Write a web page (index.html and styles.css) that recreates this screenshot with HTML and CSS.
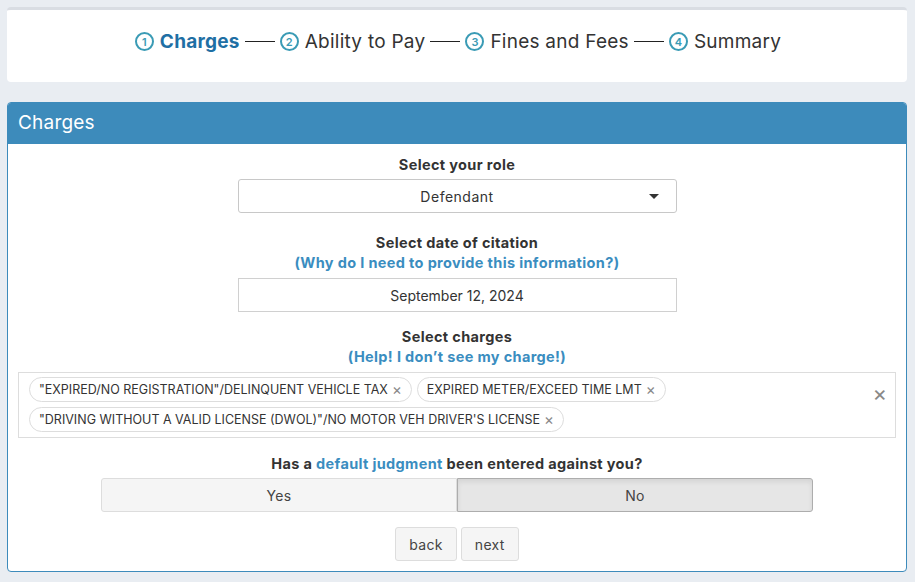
FILE: index.html
```html
<!DOCTYPE html>
<html>
<head>
<meta charset="utf-8">
<link rel="stylesheet" href="styles.css">
</head>
<body>
<div class="page">
  <div class="steps-card">
    <div class="steps">
      <span class="step active"><span class="num">1</span><span class="label">Charges</span></span>
      <span class="line"></span>
      <span class="step"><span class="num">2</span><span class="label">Ability to Pay</span></span>
      <span class="line"></span>
      <span class="step"><span class="num">3</span><span class="label">Fines and Fees</span></span>
      <span class="line"></span>
      <span class="step"><span class="num">4</span><span class="label">Summary</span></span>
    </div>
  </div>

  <div class="panel">
    <div class="panel-head">Charges</div>
    <div class="panel-body">
      <div class="field">
        <div class="label-b">Select your role</div>
        <div class="select">Defendant<span class="caret"></span></div>
      </div>
      <div class="field">
        <div class="label-b">Select date of citation</div>
        <a class="link">(Why do I need to provide this information?)</a>
        <div class="date">September 12, 2024</div>
      </div>
      <div class="field">
        <div class="label-b">Select charges</div>
        <a class="link">(Help! I don’t see my charge!)</a>
      </div>
      <div class="multi">
        <div class="tags">
          <span class="tag">"EXPIRED/NO REGISTRATION"/DELINQUENT VEHICLE TAX <span class="x">×</span></span>
          <span class="tag">EXPIRED METER/EXCEED TIME LMT <span class="x">×</span></span>
          <span class="tag">"DRIVING WITHOUT A VALID LICENSE (DWOL)"/NO MOTOR VEH DRIVER'S LICENSE <span class="x">×</span></span>
        </div>
        <span class="clear">×</span>
      </div>
      <div class="field q">
        <div class="label-b">Has a <a class="link-i">default judgment</a> been entered against you?</div>
        <div class="yesno">
          <span class="btn yn">Yes</span>
          <span class="btn yn on">No</span>
        </div>
      </div>
      <div class="nav">
        <span class="btn navb">back</span>
        <span class="btn navb">next</span>
      </div>
    </div>
  </div>
</div>
</body>
</html>
```

FILE: styles.css
```css
html, body {
  margin: 0;
  padding: 0;
  background: #e9edf2;
  font-family: "Inter", "Noto Sans", sans-serif;
  color: #333;
}
.page {
  padding: 7px 8px 0 7px;
}
.steps-card {
  background: #fff;
  border-top: 3px solid #d9dde3;
  border-radius: 4px;
  height: 75px;
  padding-bottom: 9px;
  display: flex;
  align-items: center;
  justify-content: center;
  box-sizing: border-box;
}
.steps {
  display: flex;
  align-items: center;
  margin-left: 2px;
}
.step {
  display: flex;
  align-items: center;
  font-size: 19px;
  letter-spacing: 0.25px;
  color: #333;
}
.step.active .label {
  font-weight: 700;
  color: #1f6fa4;
}
.num {
  width: 19px;
  height: 19px;
  box-sizing: border-box;
  border: 2px solid #3a9bb5;
  border-radius: 50%;
  color: #3a9bb5;
  font-size: 11px;
  font-weight: 600;
  letter-spacing: 0;
  display: flex;
  align-items: center;
  justify-content: center;
  margin-right: 6px;
}
.line {
  width: 30px;
  height: 1.5px;
  background: #222;
  margin: 0 5px;
}
.panel {
  margin-top: 20px;
  border: 1px solid #3d8bbb;
  border-radius: 4px;
  background: #fff;
  overflow: hidden;
}
.panel-head {
  background: #3d8bbb;
  color: #fff;
  height: 41px;
  line-height: 40px;
  padding-left: 10px;
  font-size: 19px;
  letter-spacing: 0.2px;
}
.panel-body {
  padding: 11px 10px 10px 10px;
}
.field {
  display: flex;
  flex-direction: column;
  align-items: center;
}
.label-b {
  font-weight: 700;
  font-size: 14.5px;
  letter-spacing: 0.35px;
  line-height: 20px;
  color: #333;
  text-align: center;
}
.link {
  font-weight: 700;
  font-size: 14.5px;
  letter-spacing: 0.35px;
  line-height: 20px;
  color: #3a8dc0;
}
.link-i { color: #3a8dc0; }
.select {
  margin-top: 4px;
  width: 439px;
  height: 34px;
  box-sizing: border-box;
  border: 1px solid #c8c8c8;
  border-radius: 3px;
  display: flex;
  align-items: center;
  justify-content: center;
  font-size: 14px;
  letter-spacing: 0.5px;
  position: relative;
  margin-bottom: 20px;
}
.caret {
  position: absolute;
  right: 17px;
  top: 14px;
  border-left: 5px solid transparent;
  border-right: 5px solid transparent;
  border-top: 5px solid #333;
}
.date {
  margin-top: 5px;
  width: 439px;
  height: 34px;
  box-sizing: border-box;
  border: 1px solid #d0d0d0;
  display: flex;
  align-items: center;
  justify-content: center;
  font-size: 14px;
  margin-bottom: 15px;
}
.multi {
  margin-top: 5px;
  border: 1px solid #ddd;
  min-height: 66px;
  box-sizing: border-box;
  display: flex;
  align-items: flex-start;
  padding: 4px 8px 4px 10px;
}
.tags {
  flex: 1;
  display: flex;
  flex-wrap: wrap;
  gap: 5px 5px;
}
.tag {
  border: 1px solid #ddd;
  border-radius: 13px;
  height: 25px;
  box-sizing: border-box;
  padding: 0 9px 0 9px;
  display: flex;
  align-items: center;
  font-size: 12.5px;
  color: #333;
  white-space: nowrap;
}
.tag .x {
  color: #888;
  font-size: 15px;
  margin-left: 4px;
}
.clear {
  color: #888;
  font-size: 22px;
  line-height: 22px;
  margin-top: 5px;
}
.q { margin-top: 16px; }
.yesno {
  margin-top: 4px;
  display: flex;
  width: 712px;
}
.btn {
  display: flex;
  align-items: center;
  justify-content: center;
  box-sizing: border-box;
  font-size: 14px;
  letter-spacing: 0.3px;
  color: #444;
  background: #f5f5f5;
  border: 1px solid #ddd;
  border-radius: 3px;
  height: 34px;
}
.yn { flex: 1; }
.yn:first-child { border-top-right-radius: 0; border-bottom-right-radius: 0; }
.yn.on {
  background: #e6e6e6;
  border-color: #adadad;
  border-top-left-radius: 0;
  border-bottom-left-radius: 0;
  box-shadow: inset 0 3px 5px rgba(0,0,0,0.08);
}
.nav {
  margin-top: 15px;
  display: flex;
  justify-content: center;
  gap: 4px;
}
.navb {
  padding: 0 13px;
}
```
